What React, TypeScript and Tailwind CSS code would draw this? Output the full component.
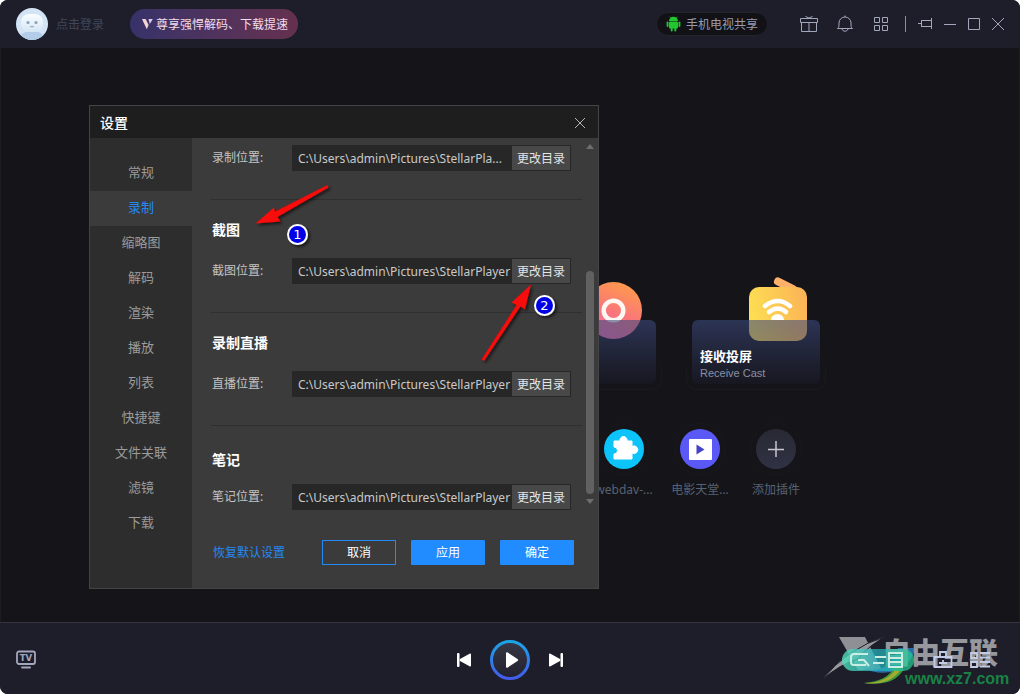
import React from "react";

type Section = { id: string; title?: string; label: string; path: string; last?: boolean };

const navItems = ["常规", "录制", "缩略图", "解码", "渲染", "播放", "列表", "快捷键", "文件关联", "滤镜", "下载"];

const sections: Section[] = [
  { id: "record", label: "录制位置:", path: "C:\\Users\\admin\\Pictures\\StellarPla..." },
  { id: "shot", title: "截图", label: "截图位置:", path: "C:\\Users\\admin\\Pictures\\StellarPlayer" },
  { id: "live", title: "录制直播", label: "直播位置:", path: "C:\\Users\\admin\\Pictures\\StellarPlayer" },
  { id: "note", title: "笔记", label: "笔记位置:", path: "C:\\Users\\admin\\Pictures\\StellarPlayer", last: true },
];

function IconButton({ label, className, children }: { label: string; className: string; children: React.ReactNode }) {
  return (
    <button type="button" aria-label={label} className={`flex shrink-0 items-center justify-center text-[#a3a7bd] ${className}`}>
      {children}
    </button>
  );
}

function Header() {
  return (
    <header className="flex h-12 shrink-0 items-center bg-[#1e1e2b] pr-[14px] pl-4">
      <svg className="size-8 shrink-0" viewBox="0 0 32 32" aria-hidden="true">
        <defs>
          <clipPath id="avatar"><circle cx="16" cy="16" r="16" /></clipPath>
          <linearGradient id="face" x1="0" y1="0" x2="0" y2="1">
            <stop offset="0" stopColor="#fafdff" /><stop offset="1" stopColor="#d5e6f5" />
          </linearGradient>
        </defs>
        <g clipPath="url(#avatar)">
          <rect width="32" height="32" fill="#d3e4f4" />
          <ellipse cx="16" cy="30" rx="12" ry="7" fill="#b3cce8" />
          <rect x="5" y="6" width="22" height="18" rx="8" fill="url(#face)" />
          <circle cx="12" cy="14.5" r="1.5" fill="#8ba0b8" />
          <circle cx="20" cy="14.5" r="1.5" fill="#8ba0b8" />
          <path d="M14 18.2q2 1.6 4 0" stroke="#8ba0b8" fill="none" />
        </g>
      </svg>
      <a href="#login" className="ml-2 pt-[2px] text-[12px] text-[#3d4859]">点击登录</a>
      <button type="button" className="ml-[26px] flex h-[30px] items-center gap-[2px] rounded-full bg-gradient-to-r from-[#37326a] to-[#66304f] px-[10px] pt-[2px] text-[12px] text-[#f0dcec]">
        <svg className="h-4 w-[14px]" viewBox="0 0 14 16" aria-hidden="true">
          <path d="M2 2h3.6l3 6-1.8 4.2z" fill="#f3d3d3" />
          <path d="M8.5 2H12.8l-3 5z" fill="#d9cdf8" />
        </svg>
        尊享强悍解码、下载提速
      </button>
      <div className="ml-auto flex items-center">
        <button type="button" className="flex h-6 items-center gap-[5px] rounded-full border border-[#24242e] bg-[#111116] px-[9px] text-[12px] text-[#969bb0]">
          <svg className="h-4 w-[15px]" viewBox="0 0 15 16" fill="#24c62f" aria-hidden="true">
            <path d="M3 5a4.5 4.3 0 0 1 9 0z" />
            <path d="M4 .6l1.4 2M11 .6l-1.4 2" stroke="#24c62f" strokeWidth=".7" />
            <rect x="3" y="5.6" width="9" height="7" rx="1" />
            <rect x=".6" y="5.6" width="1.9" height="5.4" rx=".95" />
            <rect x="12.5" y="5.6" width="1.9" height="5.4" rx=".95" />
            <rect x="4.7" y="10" width="2" height="5.6" rx="1" />
            <rect x="8.3" y="10" width="2" height="5.6" rx="1" />
          </svg>
          <span className="pt-px">手机电视共享</span>
        </button>
        <IconButton label="礼物" className="ml-8 size-[18px]">
          <svg viewBox="0 0 18 18" className="size-[18px]" fill="none" stroke="currentColor">
            <path d="M.5 3.500h17v4H.5zM1.500 7.500v9h15v-9M9 7.500v9M5.500 1.500l3.500 1.500 3.500-1.500" />
          </svg>
        </IconButton>
        <IconButton label="通知" className="ml-[18px] size-[18px]">
          <svg viewBox="0 0 18 18" className="size-[18px]" fill="none" stroke="currentColor">
            <path d="M1.500 13.500c1.500-1 1.500-2.500 1.500-5.500a6 6 0 0 1 12 0c0 3 0 4.500 1.500 5.500zM6 14c.8 3 5.200 3 6 0M9 .5v1.500" />
          </svg>
        </IconButton>
        <IconButton label="应用中心" className="ml-[18px] size-[18px]">
          <svg viewBox="0 0 18 18" className="size-[18px]" fill="none" stroke="currentColor">
            <path d="M2.500 2.500h5v5h-5zM10.500 2.500h5v5h-5zM2.500 10.500h5v5h-5zM10.500 10.500h5v5h-5z" />
          </svg>
        </IconButton>
        <span className="ml-[15px] h-4 w-px bg-[#8b8fa5]" />
        <IconButton label="置顶" className="ml-3 size-4">
          <svg viewBox="0 0 16 16" className="size-4" fill="none" stroke="currentColor">
            <path d="M0 7.500h3.500M3.500 4v7M3.500 4.500h10M3.500 10.500h10M13.500 2v11" />
          </svg>
        </IconButton>
        <IconButton label="最小化" className="ml-2 size-4">
          <svg viewBox="0 0 16 16" className="size-4" stroke="currentColor"><path d="M2 8.500h12" /></svg>
        </IconButton>
        <IconButton label="最大化" className="ml-2 size-4">
          <svg viewBox="0 0 16 16" className="size-4" fill="none" stroke="currentColor"><path d="M2.500 2.500h11v11h-11z" /></svg>
        </IconButton>
        <IconButton label="关闭" className="ml-2 size-4">
          <svg viewBox="0 0 16 16" className="size-4" stroke="currentColor"><path d="M2 2l12 12M14 2L2 14" /></svg>
        </IconButton>
      </div>
    </header>
  );
}

function FeatureCard({ icon, children }: { icon: React.ReactNode; children?: React.ReactNode }) {
  return (
    <div className="relative w-32">
      {icon}
      <div className="absolute -inset-x-[6px] top-10 -bottom-[6px] rounded-[10px] border border-t-0 border-[#1a1a20]" />
      <div className="relative flex h-16 flex-col justify-end rounded-md bg-gradient-to-b from-[#3d4a7e99] to-[#1b1c2a66] px-2 pb-[3px]">
        {children}
      </div>
    </div>
  );
}

function Plugin({ name, children }: { name: string; children: React.ReactNode }) {
  return (
    <button type="button" className="flex w-[76px] flex-col items-center gap-[11px] text-[12px] leading-5 text-[#596273]">
      <span className="flex size-10 items-center justify-center rounded-full outline outline-offset-[5px] outline-[#18181e]">{children}</span>
      <span className="whitespace-nowrap">{name}</span>
    </button>
  );
}

function Home() {
  return (
    <div className="mx-auto w-[620px] pt-[272px]">
      <div className="flex justify-end gap-9">
        <FeatureCard
          icon={
            <svg className="absolute -top-[38px] right-[14px] size-[57px]" viewBox="0 0 57 57" aria-hidden="true">
              <defs>
                <linearGradient id="rec" x1="0.700" y1="0" x2="0.300" y2="1">
                  <stop offset="0" stopColor="#ff9b4b" /><stop offset="0.550" stopColor="#f9757b" /><stop offset="1" stopColor="#ef70b8" />
                </linearGradient>
              </defs>
              <circle cx="28.500" cy="28.500" r="28.500" fill="url(#rec)" />
              <circle cx="28.500" cy="28.500" r="9.800" fill="none" stroke="#fff7f2" strokeWidth="4.500" />
            </svg>
          }
        />
        <FeatureCard
          icon={
            <svg className="absolute -top-[44px] right-[13px] h-[65px] w-[58px]" viewBox="0 0 58 65" aria-hidden="true">
              <defs>
                <linearGradient id="cast" x1="0" y1="0.500" x2="1" y2="0.300">
                  <stop offset="0" stopColor="#fddf52" /><stop offset="1" stopColor="#fbb456" />
                </linearGradient>
              </defs>
              <path d="M29 5.500L44 13" stroke="#ffb069" strokeWidth="8" strokeLinecap="round" />
              <rect y="11" width="58" height="54" rx="10" fill="url(#cast)" />
              <g fill="none" stroke="#fff" strokeWidth="4.500" strokeLinecap="round">
                <path d="M16 30q13-10 25 0" /><path d="M20 36q9-7 17 0" />
              </g>
              <path d="M22 44a6.500 6 0 0 1 13 0z" fill="#fff" />
            </svg>
          }
        >
          <h3 className="text-[13px] leading-[18px] font-bold text-white">接收投屏</h3>
          <p className="font-['Liberation_Sans',sans-serif] text-[11px] leading-4 text-[#8b8fa3]">Receive Cast</p>
        </FeatureCard>
      </div>
      <div className="mt-[45px] flex justify-end pr-[6px]">
        <Plugin name="webdav-...">
          <svg className="size-10" viewBox="0 0 40 40" aria-hidden="true">
            <circle cx="20" cy="20" r="20" fill="#0cc4fa" />
            <path d="M10 12h6a3.600 3.600 0 1 1 7 0h5v5.500a3.800 3.800 0 1 1 0 6.500v6H10v-5a3.400 3.400 0 0 0 0-7z" fill="#fff" stroke="#fff" strokeLinejoin="round" />
          </svg>
        </Plugin>
        <Plugin name="电影天堂...">
          <svg className="size-10" viewBox="0 0 40 40" aria-hidden="true">
            <circle cx="20" cy="20" r="20" fill="#5b59f5" />
            <rect x="9" y="10" width="23" height="21" rx="1" fill="#fff" />
            <path d="M16.500 15.500v10l8-5z" fill="#4544c4" />
          </svg>
        </Plugin>
        <Plugin name="添加插件">
          <svg className="size-10" viewBox="0 0 40 40" aria-hidden="true">
            <defs>
              <linearGradient id="add" x1="0" y1="0" x2="0" y2="1">
                <stop offset="0" stopColor="#282933" /><stop offset="1" stopColor="#303245" />
              </linearGradient>
            </defs>
            <circle cx="20" cy="20" r="20" fill="url(#add)" />
            <path d="M12 20.500h16M20 12v16" stroke="#c6c7ce" strokeWidth="1.500" />
          </svg>
        </Plugin>
      </div>
    </div>
  );
}

function PathRow({ section }: { section: Section }) {
  return (
    <div className="flex items-center">
      <label htmlFor={section.id} className="w-20 text-[12px] leading-[26px] text-[#c4c4c4]">{section.label}</label>
      <div className="flex h-[26px] w-[279px] border border-[#272727] bg-[#272727]">
        <input id={section.id} type="text" readOnly value={section.path} className="min-w-0 flex-1 bg-transparent pt-[2px] pl-[5px] text-[12px] text-[#c9c9c9] outline-none" />
        <button type="button" className="w-[58px] bg-[#484848] pt-[2px] text-[12px] whitespace-nowrap text-[#e4e4e4]">更改目录</button>
      </div>
    </div>
  );
}

function Annotations() {
  return (
    <svg className="pointer-events-none absolute -top-px -left-px h-[484px] w-[510px]" viewBox="89 105 510 484" aria-hidden="true">
      <defs>
        <filter id="shade" x="-20%" y="-20%" width="140%" height="140%">
          <feDropShadow dx="2" dy="2" stdDeviation="1.500" floodOpacity="0.600" />
        </filter>
      </defs>
      <g filter="url(#shade)">
        <path d="M327.500 185L275 211.500l-1-4L255.500 223.500l25-2-3-4.500L328.500 187.500z" fill="#f80808" />
        <path d="M531 284.500L511.500 302.500l5 2.500L481.500 359.500l2.500 1.500L520.500 306.500l4.500 3z" fill="#f80808" />
        <circle cx="297.500" cy="234.500" r="10.500" fill="#fff" />
        <circle cx="544.500" cy="305.500" r="10.500" fill="#fff" />
      </g>
      <circle cx="297.500" cy="234.500" r="8.500" fill="#0000e6" />
      <circle cx="544.500" cy="305.500" r="8.500" fill="#0000e6" />
      <g fill="#fff" fontFamily="DejaVu Sans, sans-serif" fontSize="13" textAnchor="middle">
        <text x="297.500" y="239">1</text>
        <text x="544.500" y="310">2</text>
      </g>
    </svg>
  );
}

function SettingsDialog() {
  return (
    <section role="dialog" aria-label="设置" className="absolute top-[57px] left-[88px] flex w-[510px] flex-col border border-[#444447] bg-[#3b3b3b]">
      <header className="flex h-8 items-center justify-between bg-[#1e1e1e] pt-px pr-[10px] pl-[10px]">
        <h2 className="text-[14px] font-medium text-white">设置</h2>
        <button type="button" aria-label="关闭设置" className="text-[#b5b5b5]">
          <svg viewBox="0 0 16 16" className="size-4" stroke="currentColor"><path d="M3 3l10 10M13 3L3 13" /></svg>
        </button>
      </header>
      <div className="flex h-[450px]">
        <nav className="flex w-[102px] shrink-0 flex-col bg-[#2d2d2d] pt-[18px]">
          {navItems.map((item) => (
            <button
              key={item}
              type="button"
              className={item === "录制" ? "h-[35px] bg-[#3b3b3b] pb-px text-[13px] text-[#2489f5]" : "h-[35px] pb-px text-[13px] text-[#9b9b9b]"}
            >
              {item}
            </button>
          ))}
        </nav>
        <div className="flex min-w-0 flex-1 flex-col">
          <div className="flex">
            <div className="flex-1 pt-[7px] pl-[19px]">
              {sections.map((s) => (
                <div key={s.id} className={s.last ? "pl-px" : "border-b border-[#2f2f2f] pb-7 pl-px"}>
                  {s.title && (
                    <h3 className={s.last ? "pt-6 pb-[14px] text-[14px] leading-5 font-bold text-white" : "pt-5 pb-[18px] text-[14px] leading-5 font-bold text-white"}>
                      {s.title}
                    </h3>
                  )}
                  <PathRow section={s} />
                </div>
              ))}
            </div>
            <div className="flex w-4 flex-col items-center justify-between pt-1">
              <svg viewBox="0 0 8 8" className="size-2" fill="#6e6e6e"><path d="M0 7l4-5 4 5z" /></svg>
              <div className="mt-auto mb-1 h-[223px] w-2 rounded-full bg-[#616161]" />
              <svg viewBox="0 0 8 8" className="mb-1 size-2" fill="#6e6e6e"><path d="M0 1l4 5 4-5z" /></svg>
            </div>
          </div>
          <footer className="mt-[30px] flex items-center gap-[15px] pr-6 pl-[21px]">
            <a href="#reset" className="mr-auto text-[12px] text-[#2489f5]">恢复默认设置</a>
            <button type="button" className="h-[25px] w-[74px] border border-[#2489f5] text-[12px] text-white">取消</button>
            <button type="button" className="h-[25px] w-[74px] rounded-[1px] bg-[#218cff] text-[12px] text-white">应用</button>
            <button type="button" className="h-[25px] w-[74px] rounded-[1px] bg-[#218cff] text-[12px] text-white">确定</button>
          </footer>
        </div>
      </div>
      <Annotations />
    </section>
  );
}

function Watermark() {
  return (
    <div className="pointer-events-none absolute right-0 bottom-0 h-[62px] w-[200px]">
      <svg className="absolute inset-0 h-[62px] w-[200px]" viewBox="820 632 200 62" aria-hidden="true">
        <path d="M839 637h26l17 33h-24z" fill="#8f8f96" />
        <path d="M887 636q-40 12-65 44 18-16 36-21 12-15 29-23z" fill="#97979e" stroke="#1e1e2b" />
        <path d="M862 668q26 8 36-20h17c-4 22-28 31-53 20z" fill="#2a6fa8" />
        <path d="M864 683q24-2 30-16l10 2q-10 18-40 14z" fill="#3d9a3c" />
        <path d="M864 683q22 0 31-13l5 1q-12 15-36 12z" fill="#a4a92f" />
      </svg>
      <span className="absolute top-[6px] left-[62px] text-[29px] leading-[30px] font-black whitespace-nowrap text-[#97979e]">自由互联</span>
      <span className="absolute top-[39px] left-[85px] font-['Liberation_Sans',sans-serif] text-[16px] leading-4 font-bold text-[#198244]">www.xz7.com</span>
    </div>
  );
}

function PlayerBar() {
  return (
    <footer className="relative grid h-[72px] shrink-0 grid-cols-3 items-center border-t border-[#35353f] bg-[#1e1e2b] px-4 pt-[3px]">
      <IconButton label="电视" className="size-5">
        <svg viewBox="0 0 20 20" className="size-5" fill="none" stroke="currentColor" strokeWidth="1.800">
          <rect x="1" y="1.500" width="18" height="12.500" rx="2" />
          <path d="M6 17.500h8" strokeLinecap="round" />
          <text x="10" y="11" fill="currentColor" stroke="none" fontFamily="DejaVu Sans, sans-serif" fontWeight="700" fontSize="8.500" textAnchor="middle">TV</text>
        </svg>
      </IconButton>
      <div className="flex items-center justify-center gap-[18px]">
        <button type="button" aria-label="上一个">
          <svg viewBox="0 0 16 16" className="size-4" fill="#fff"><rect x="1" y="1" width="2.500" height="14" rx="1" /><path d="M15 2.500v11q0 1.500-1.500.8L4 9q-1-1 0-2l9.500-5.300Q15 1 15 2.500z" /></svg>
        </button>
        <button type="button" aria-label="播放">
          <svg viewBox="0 0 40 40" className="size-10">
            <defs>
              <linearGradient id="ring" x1="0" y1="0" x2="0" y2="1"><stop offset="0" stopColor="#1ba5e8" /><stop offset="1" stopColor="#435be8" /></linearGradient>
              <linearGradient id="disc" x1="0" y1="0" x2="0" y2="1"><stop offset="0" stopColor="#373746" /><stop offset="1" stopColor="#20202f" /></linearGradient>
            </defs>
            <circle cx="20" cy="20" r="18.500" fill="url(#disc)" stroke="url(#ring)" strokeWidth="3" />
            <path d="M16 13.500q0-2 1.800-1L27.500 19q1.300 1 0 2l-9.700 6.500q-1.800 1-1.800-1z" fill="#fff" />
          </svg>
        </button>
        <button type="button" aria-label="下一个">
          <svg viewBox="0 0 16 16" className="size-4" fill="#fff"><rect x="12.500" y="1" width="2.500" height="14" rx="1" /><path d="M1 2.500v11q0 1.500 1.500.8L12 9q1-1 0-2L2.500 1.700Q1 1 1 2.500z" /></svg>
        </button>
      </div>
      <div className="relative z-10 flex items-center justify-end gap-[17px] pr-[14px]">
        <button type="button" aria-label="小窗播放" className="mr-[2px] flex h-[22px] w-[72px] items-center justify-center rounded-full bg-gradient-to-r from-[#4fe0ba]/80 via-[#24b3c0]/70 to-[#27d48c]/70">
          <svg viewBox="0 0 60 18" className="h-[18px] w-[60px]" fill="none" stroke="#c9efe3" strokeWidth="2"><path d="M20 3H6q-3 0-3 3v5q0 3 3 3h12M10 9h6l5 6M27 6h11M25 12h11M41 2h13v14H41zM41 7h13M41 11h13" /></svg>
        </button>
        <IconButton label="工具箱" className="size-5">
          <svg viewBox="0 0 20 20" className="size-5" fill="none" stroke="#c4cbe5" strokeWidth="1.800"><path d="M7 6V2h6v4M1.500 7h17v10h-17zM6 13h8M10 10v4" /></svg>
        </IconButton>
        <IconButton label="播放列表" className="size-5">
          <svg viewBox="0 0 20 20" className="size-5" fill="none" stroke="#c4cbe5" strokeWidth="1.800"><path d="M1 3h6v5H1zM1 12h6v5H1zM10 3h10M10 7.500h10M10 12h10M10 16.500h10" /></svg>
        </IconButton>
      </div>
      <Watermark />
    </footer>
  );
}

export default function App() {
  return (
    <div className="bg-white font-['Noto_Sans','Noto_Sans_CJK_SC',sans-serif]">
      <div className="flex min-h-screen flex-col overflow-hidden rounded-lg bg-[#141419]">
        <Header />
        <main className="relative flex-1 border-x border-[#1c1c22]">
          <Home />
          <SettingsDialog />
        </main>
        <PlayerBar />
      </div>
    </div>
  );
}
